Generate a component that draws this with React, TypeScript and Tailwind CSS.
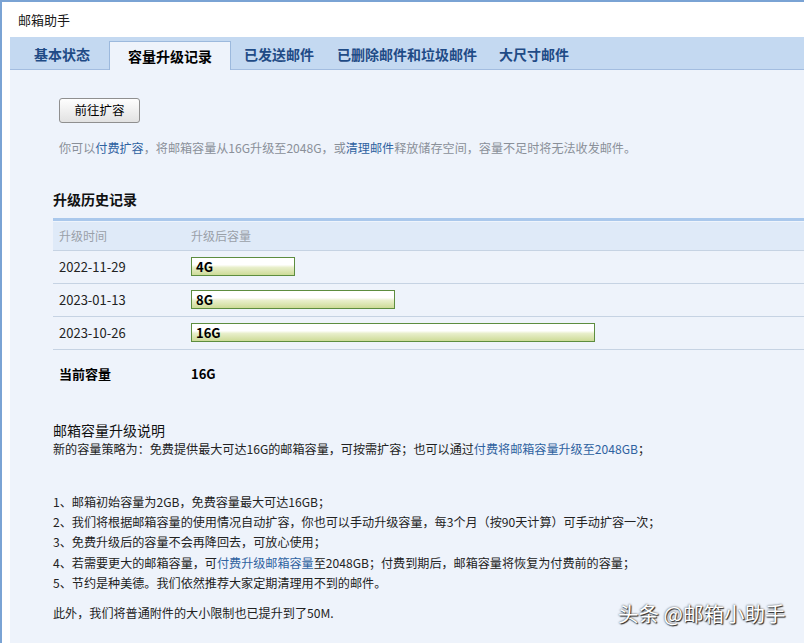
import React from 'react';

const tabs = [
  { label: '基本状态', active: false, cls: 'pl-[24px] pr-[19px]' },
  { label: '容量升级记录', active: true, cls: 'px-[18px]' },
  { label: '已发送邮件', active: false, cls: 'pl-[13px] pr-[11px]' },
  { label: '已删除邮件和垃圾邮件', active: false, cls: 'pl-[12px] pr-[11px]' },
  { label: '大尺寸邮件', active: false, cls: 'pl-[11px] pr-[11px]' },
];

const history = [
  { date: '2022-11-29', size: 4 },
  { date: '2023-01-13', size: 8 },
  { date: '2023-10-26', size: 16 },
];

const Link = ({ children }: { children: React.ReactNode }) => (
  <span className="text-[#2f62a0]">{children}</span>
);

export default function App() {
  return (
    <div
      className="relative w-[804px] h-[643px] overflow-hidden bg-white border-t-2 border-l-2 border-[#7aa3d4] text-[#222]"
      style={{ fontFamily: '"Noto Sans CJK SC", "Noto Sans", sans-serif' }}
    >
      {/* title */}
      <div className="h-[35px] pl-[16px] flex items-center text-[13px] text-[#1a1a1a]">邮箱助手</div>

      <div className="pl-[8px] h-full">
        {/* tab bar */}
        <div className="h-[33px] bg-[#c4d9f1] border-b border-[#a3bde0] flex items-end">
          {tabs.map(t => (
            <div
              key={t.label}
              className={
                t.active
                  ? `${t.cls} h-[29px] -mb-px flex items-center bg-[#eef3fb] border border-b-0 border-[#9cb9dd] text-[14px] font-bold text-black`
                  : `${t.cls} h-[29px] flex items-center text-[14px] font-bold text-[#1f4b86]`
              }
            >
              {t.label}
            </div>
          ))}
        </div>

        {/* content */}
        <div className="bg-[#eef3fb] h-full pt-[26px]">
          <div className="pl-[49px]">
            <button className="w-[81px] h-[25px] border border-[#8f8f8f] rounded-[3px] bg-[linear-gradient(#fefefe,#e2e2e2)] text-[12.5px] text-black">
              前往扩容
            </button>
            <p className="mt-[16px] text-[12.1px] leading-[18px] text-[#8a9099]">
              你可以<Link>付费扩容</Link>，将邮箱容量从16G升级至2048G，或<Link>清理邮件</Link>释放储存空间，容量不足时将无法收发邮件。
            </p>
          </div>

          <div className="pl-[43px]">
            <h2 className="mt-[32px] text-[14px] leading-[20px] font-bold text-[#111]">升级历史记录</h2>

            <div className="mt-[9px] border-t-[3px] border-[#aac8ec]">
              <div className="h-[30px] bg-[#dfeaf8] border-t border-[#eef4fc] border-b border-b-[#c6d3e3] flex items-center text-[12px] text-[#9aa0a8]">
                <div className="w-[138px] pl-[6px]">升级时间</div>
                <div>升级后容量</div>
              </div>
              {history.map(h => (
                <div key={h.date} className="h-[33px] border-b border-[#c6d3e3] flex items-center text-[13px]">
                  <div className="w-[138px] pl-[6px]">{h.date}</div>
                  <div
                    className="h-[19px] border border-[#5d8d3f] bg-[linear-gradient(to_bottom,#ffffff_0%,#ffffff_40%,#e9efcc_55%,#cddb97_100%)] flex items-center pl-[4px] font-bold text-[13px] text-black"
                    style={{ width: h.size * 25 + 4 }}
                  >
                    {h.size}G
                  </div>
                </div>
              ))}
              <div className="h-[48px] flex items-center text-[13px] font-bold text-black">
                <div className="w-[138px] pl-[6px]">当前容量</div>
                <div>16G</div>
              </div>
            </div>

            <h3 className="mt-[24px] text-[14px] leading-[17px] text-[#111]">邮箱容量升级说明</h3>
            <p className="text-[12.1px] leading-[19px]">
              新的容量策略为：免费提供最大可达16G的邮箱容量，可按需扩容；也可以通过<Link>付费将邮箱容量升级至2048GB</Link>；
            </p>

            <ol className="mt-[34px] text-[12.1px] leading-[20.25px]">
              <li>1、邮箱初始容量为2GB，免费容量最大可达16GB；</li>
              <li>2、我们将根据邮箱容量的使用情况自动扩容，你也可以手动升级容量，每3个月（按90天计算）可手动扩容一次；</li>
              <li>3、免费升级后的容量不会再降回去，可放心使用；</li>
              <li>4、若需要更大的邮箱容量，可<Link>付费升级邮箱容量</Link>至2048GB；付费到期后，邮箱容量将恢复为付费前的容量；</li>
              <li>5、节约是种美德。我们依然推荐大家定期清理用不到的邮件。</li>
            </ol>

            <p className="mt-[10px] text-[12.1px] leading-[20px]">此外，我们将普通附件的大小限制也已提升到了50M.</p>
          </div>
        </div>
      </div>

      {/* watermark */}
      <div className="absolute left-[616px] top-[597px] text-[20.5px] leading-[28px] text-white [text-shadow:0_0_2px_#333,1px_1px_1px_#222]">
        头条 @邮箱小助手
      </div>
    </div>
  );
}
